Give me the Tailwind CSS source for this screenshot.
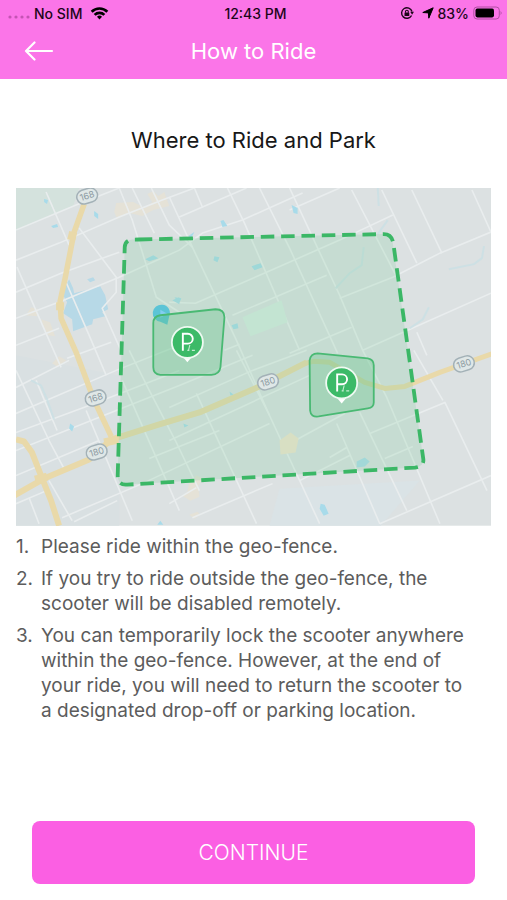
<!DOCTYPE html>
<html lang="en">
<head>
<meta charset="utf-8">
<meta name="viewport" content="width=device-width, initial-scale=1">
<title>How to Ride</title>
<script src="https://cdn.jsdelivr.net/npm/@tailwindcss/browser@4"></script>
</head>
<body class="flex min-h-screen flex-col bg-white font-['Inter','Liberation_Sans',sans-serif]">
<header class="bg-[#fb75e8] pb-2">
  <!-- status bar -->
  <div class="grid h-[26px] grid-cols-3 items-center pl-2 pr-1 text-[14px] font-medium text-[#1c0619]">
    <div class="flex items-center gap-1">
      <svg class="mt-2 h-1 w-[22px]" viewBox="0 0 22 4" fill="#c453b4" aria-hidden="true"><circle cx="2" cy="2" r="1.6"/><circle cx="8" cy="2" r="1.6"/><circle cx="14" cy="2" r="1.6"/><circle cx="20" cy="2" r="1.6"/></svg>
      <span class="whitespace-nowrap">No SIM</span>
      <svg class="ml-1 h-[14px] w-[19px]" viewBox="0 0 20 15" fill="none" stroke="#000" stroke-width="2.9" aria-label="Wi-Fi"><path d="M1.6 6.1a12 12 0 0 1 16.8 0"/><path d="M4.8 9.5a7.4 7.4 0 0 1 10.4 0"/><path d="M10 14.400l-2.700-2.800a3.900 3.900 0 0 1 5.400 0z" fill="#000" stroke="none"/></svg>
    </div>
    <span class="text-center">12:43 PM</span>
    <div class="flex items-center justify-end gap-1">
      <svg class="mr-1 h-[14px] w-[14px]" viewBox="0 0 14 14" fill="none" stroke="#1c0619" stroke-width="1.4" aria-label="Rotation lock"><path d="M12 5.500A5.300 5.300 0 1 0 11.600 9.500"/><path d="M10.200 5.800h3.800l-1.900 3z" fill="#1c0619" stroke="none"/><path d="M5.500 6.800V5.600a1.400 1.400 0 0 1 2.800 0v1.200" stroke-width="1.100"/><rect x="4.500" y="6.400" width="4.800" height="3.500" rx=".5" fill="#1c0619" stroke="none"/></svg>
      <svg class="h-3 w-3" viewBox="0 0 12 12" fill="#000" stroke="#000" stroke-linejoin="round" aria-label="Location"><path d="M11.200.8L6.800 11.200 6.400 5.900.8 5.500z"/></svg>
      <span>83%</span>
      <svg class="h-[14px] w-[30px]" viewBox="0 0 30 14" aria-label="Battery"><rect x=".8" y="1" width="25.500" height="12" rx="3.200" fill="none" stroke="#b04fa2"/><rect x="2.500" y="2.600" width="18.500" height="8.800" rx="1.800"/><path d="M27.700 4.800q1.800 2.200 0 4.400z" fill="#9f4a93"/></svg>
    </div>
  </div>
  <div class="grid h-[45px] grid-cols-[1fr_auto_1fr] items-center px-6 pt-1">
    <button class="w-8 cursor-pointer" aria-label="Back"><svg class="h-5 w-[30px]" viewBox="0 0 30 20" fill="none" stroke="#fff" stroke-width="2.2" stroke-linecap="round" stroke-linejoin="round"><path d="M28 10H2M10.500 1.500L2 10l8.500 8.500"/></svg></button>
    <h1 class="text-[22px] leading-7 text-white">How to Ride</h1>
  </div>
</header>
<main class="flex grow flex-col px-4 pb-4">
  <h2 class="mt-[46px] text-center text-[22px] leading-[30px] text-[#181818]">Where to Ride and Park</h2>
  <svg class="mt-[33px] block w-full" viewBox="17 188 474 337" role="img" aria-label="Map of the geo-fence and its parking zones">
    <rect x="17" y="188" width="474" height="337" fill="#dce1e2"/>
    <path d="M17 188h63l-6 18-57 25z" fill="#d4e2dd"/>
    <path d="M17 355l103 20v150H17z" fill="#d9e0e2"/>
    <path d="M280 488l140-8-39 45H270z" fill="#dae3e6"/>
    <g fill="#e5e2d7"><path d="M117 203l17-1 12 6 7-6-5-8 6-3 5 5 6-4 5 14-16 4-11 6-13-3-12 6-3-7z"/><path d="M27 315l5-8 7 2-1 7zM44 325l-2-6 9 3 5 14-7-1zM53 363l7-7 7 4-8 7z"/><path d="M190 482l7-7 7 3-5 7 1 11-9 4-8-5 5-4zM190 514l8-3 3 3-6 4z"/></g>
    <g fill="#b7d9e7"><path d="M67 285l3-6 4 9 1 5 26-7 5 9 3 14-6 3 3 4-12 3-1 5-19 7-1-12-9-6 4-11-4-7z"/><path d="M88 279l6-2 2 3-5 2z"/></g>
    <g fill="none" stroke="#e9edee" stroke-width="1.600" stroke-linejoin="round">
      <path d="M17 230L77 205 120 188M17 260L60 243 120 217 163 200 195 188M17 292L62 273 120 252M17 318L62 301 120 277 180 250 203 233 243 220 303 193M180 217L247 188M290 210L340 188"/>
      <path d="M170 302L196 303 267 272 340 240 393 215M233 315L327 275M340 298L393 277 440 253 491 232M225 350L240 344M290 353L352 327M363 350L491 293M68 358L112 342M17 345L60 328"/>
      <path d="M47 192L70 245M18 267L47 333 62 367M80 228L117 277V292L103 308 123 353M67 282L90 335 107 375M120 188L133 220 157 297 180 312M133 188L155 233M152 188L170 225 193 247"/>
      <path d="M170 197L193 247 237 340 270 415 320 523M195 188L203 207M228 188L245 223 300 350M260 188L290 248 338 353M290 188L340 295 363 350 387 397 440 523M352 190L397 277M382 190L417 263M412 190L442 253M472 190L491 232M417 332L427 355"/>
      <path d="M17 387L70 360M17 413L117 370 180 345M17 432L90 405 180 370M17 450L117 410 180 385 253 355M17 475L100 440M63 517L143 483 270 423M75 521L118 500M17 503L50 489M170 407L253 370 307 350M170 440L310 375M150 458L220 430"/>
      <path d="M30 497L40 523M50 480L73 520M17 370L50 440 66 470M37 380L58 430M87 410L133 520M123 380L167 480 180 510M130 350L150 390 176 440 200 490M197 393L257 523M237 350L270 415M193 517L273 483M290 443L345 413M170 503L197 487"/>
      <path d="M380 523L491 475M370 433L445 402 487 490M414 350L443 400M360 412L407 510M337 423L380 523M330 457L347 447M300 480L350 455M385 458L413 446"/>
    </g>
    <g fill="none" stroke="#e9d9a9" stroke-width="6" stroke-linejoin="round">
      <path d="M85 204L75 232 66 278 61 301 62 318 77 352 95 400 112 436" stroke-width="5.500"/>
      <path d="M17 439L25 441 33 452 42 475 52 500 60 525"/>
      <path d="M15 495L45 478 90 459 112 439 160 424 200 412 260 386 307 362"/>
      <path d="M305 363L314 361 330 362 365 382 385 388 405 386 440 372 493 353" stroke-width="5"/>
      <path d="M72 240l2-8M61 310v-8M36 479l12-3M105 442l14-3" stroke-width="8"/>
    </g>
    <g fill="none" stroke="#c9e0e5" stroke-width="2" opacity=".8"><path d="M378 188l1 18M388 220l-10 14M364 247l-2 18-12 8-14 15M484 246l-2 12-8 6-25 5M429 307l-6 12-13 9M32 380l10 5 6 14 7 20"/></g>
    <g fill="#a8dbea"><path d="M45 199l4 1-1 4-3-2zM52 226l6-2 1 3-5 1zM95 211l4 3v5l-4-3zM146 259l8-4 5 3-9 3zM173 300l7-3v7zM221 221l3-1 4 6-5 1zM189 236l6-4-3 6zM292 205l6 3v6l-4-1zM215 256l5 1-2 5-4-2zM252 266l9-3 2 4-8 3zM175 297l7 1-2 5zM232 325l6-2 1 5-5 1zM71 423l4 3-2 5-3-3zM230 391l4 3-3 1zM184 423l5 2-4 2zM321 503l4 1 4 9-5 2-4-7zM158 524l3-4 3 4z"/><path d="M357 461l8-4 5 4-5 5-8 1z" opacity=".9"/></g>
    <path d="M133 239.500L384 234Q392 234 393 243L423.500 459Q424 466 415 467L128 484Q118 485 118.500 474L125.500 247Q126 240 133 239.500z" fill="#7bcf9a" fill-opacity=".22"/>
    <path d="M243 317l39-17 6 22-37 14z" fill="#c3e4d2"/>
    <path d="M280 440l11-8 8 6-3 14-15 2z" fill="#d8dfc3"/>
    <path d="M139.500 239.400L384 234Q392 234 393.500 243L423.500 459Q424 466 415 467L128 484Q118 485 118.500 474L125.500 247Q126 240 133 239.500z" fill="none" stroke="#3bb766" stroke-width="3.800" stroke-dasharray="13.500 6.800"/>
    <path d="M163 304.500a8 8 0 0 1 7 11l-2 9-7-3a8.300 8.300 0 0 1 2-17z" fill="#5bc4d6"/><path d="M161 309.500l7 4-7 4z" fill="#83cdf0"/>
    <g fill="#68c78d" fill-opacity=".35" stroke="#49b973" stroke-width="1.800">
      <path d="M161 315L216 309Q225 309 225 317L221 367Q220 374 212 374.500H161Q154 374 154 367V323Q154 316 161 315z"/>
      <path d="M318 353L368 358Q374 359 374 365V402Q374 407 368 408L319 416Q311 417 310.500 410L310 360Q311 353 318 353z"/>
    </g>
    <g>
      <path d="M183 356h10l-5 6z" fill="#fff"/><circle cx="188" cy="342" r="15.500" fill="#3cba68" stroke="#eefaf2" stroke-width="1.800"/>
      <path d="M183.500 350.500V333.500h5a4.900 4.900 0 0 1 0 9.800h-5" fill="none" stroke="#fff" stroke-width="1.900"/><path d="M190.500 344.500l-1.500 6m-1-.5h2m2.500 0h3" fill="none" stroke="#c4ebd1" stroke-width="1.100"/>
    </g>
    <g>
      <path d="M337 397h10l-5 6z" fill="#fff"/><circle cx="342" cy="382.500" r="15.500" fill="#3cba68" stroke="#eefaf2" stroke-width="1.800"/>
      <path d="M337.500 391V374h5a4.900 4.900 0 0 1 0 9.800h-5" fill="none" stroke="#fff" stroke-width="1.900"/><path d="M344.500 385l-1.500 6m-1-.5h2m2.500 0h3" fill="none" stroke="#c4ebd1" stroke-width="1.100"/>
    </g>
    <!-- route shields -->
    <g fill="#dfe7e7" stroke="#a3b1b7" stroke-width="1.500">
      <rect x="77.500" y="189" width="21" height="14" rx="7" transform="rotate(-17 88 196)"/>
      <rect x="86" y="390.500" width="21" height="14" rx="7" transform="rotate(-17 96.500 397.500)"/>
      <rect x="87" y="444.500" width="21" height="14" rx="7" transform="rotate(-17 97.500 451.500)"/>
      <rect x="258" y="374.500" width="21" height="14" rx="7" transform="rotate(-17 268.500 381.500)"/>
      <rect x="453.500" y="356.500" width="21" height="14" rx="7" transform="rotate(-17 464 363.500)"/>
    </g>
    <g fill="#8c9aa1" font-size="9" text-anchor="middle">
      <text x="88" y="199" transform="rotate(-17 88 196)">168</text>
      <text x="96.500" y="400.500" transform="rotate(-17 96.500 397.500)">168</text>
      <text x="97.500" y="454.500" transform="rotate(-17 97.500 451.500)">180</text>
      <text x="268.500" y="384.500" transform="rotate(-17 268.500 381.500)">180</text>
      <text x="464" y="366.500" transform="rotate(-17 464 363.500)">180</text>
    </g>
  </svg>
  <ol class="mt-2 flex flex-col gap-[7px] pr-5 text-[19px] leading-[25px] text-[#5c5c5c]">
    <li class="flex"><span class="w-[25px] shrink-0">1.</span><p>Please ride within the geo-fence.</p></li>
    <li class="flex"><span class="w-[25px] shrink-0">2.</span><p>If you try to ride outside the geo-fence, the scooter will be disabled remotely.</p></li>
    <li class="flex"><span class="w-[25px] shrink-0">3.</span><p>You can temporarily lock the scooter anywhere within the geo-fence. However, at the end of your ride, you will need to return the scooter to a designated drop-off or parking location.</p></li>
  </ol>
  <button class="mx-4 mt-auto h-[63px] cursor-pointer rounded-lg bg-[#fb5fe3] text-[21px] font-light text-white">CONTINUE</button>
</main>
</body>
</html>
